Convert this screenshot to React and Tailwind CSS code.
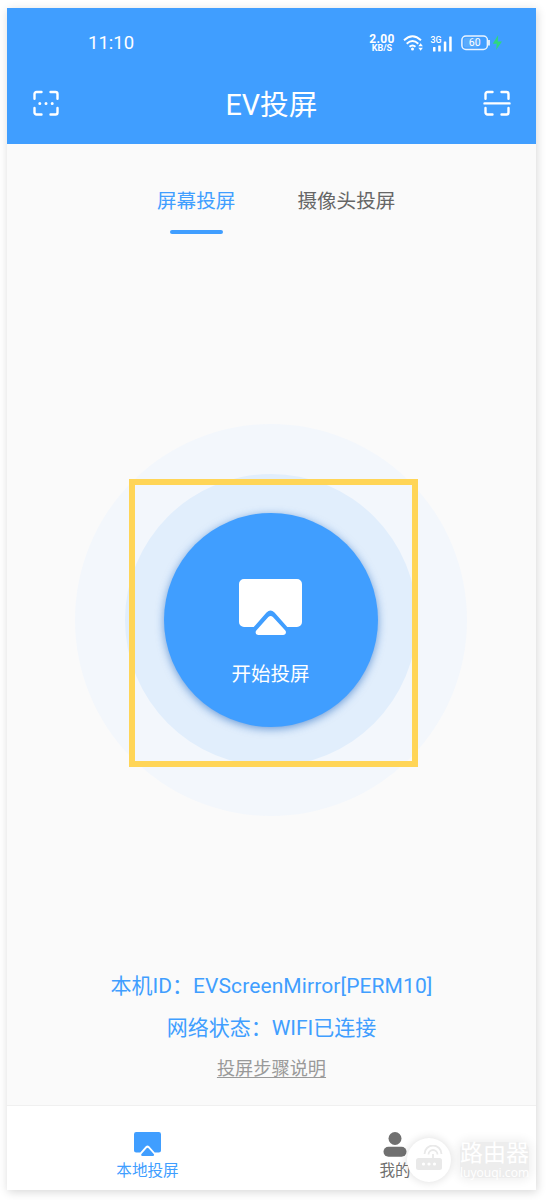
import React from "react";

const CastIcon = ({ className }) => (
    <svg viewBox="0 0 63 56" className={className} fill="currentColor">
        <path d="M5 0h53a5 5 0 0 1 5 5v38a5 5 0 0 1-5 5h-9.700L35.500 33.500q-4-4-8 0L14.700 48H5a5 5 0 0 1-5-5V5a5 5 0 0 1 5-5z" />
        <path d="M29.300 38q2.300-2.200 4.600 0l12.200 13.300c1.800 2 .6 4.700-1.900 4.700H19.400c-2.500 0-3.700-2.700-1.900-4.700z" />
    </svg>
);

const ScanFrame = ({ children }) => (
    <svg
        viewBox="0 0 28 28"
        className="w-7 h-7"
        fill="none"
        stroke="currentColor"
        strokeWidth="2.4"
        strokeLinecap="round"
        strokeLinejoin="round"
    >
        <path d="M2.500 9.800V5a2 2 0 0 1 2-2h5M18.500 3h5a2 2 0 0 1 2 2v4.800M25.500 19v4.500a2 2 0 0 1-2 2h-5M9.500 25.500h-5a2 2 0 0 1-2-2V19" />
        {children}
    </svg>
);

const StatusBar = () => (
    <div className="flex items-center h-[30px] mt-5 pl-[81px] pr-[33px]">
        <span className="text-[18.500px] leading-[30px]">11:10</span>

        <div className="flex items-center ml-auto">
            <div className="flex flex-col items-center w-[26px] font-bold mr-2">
                <span className="text-[12px] leading-[10px] tracking-[0.4px]">2.00</span>
                <span className="text-[9px] leading-[9px]">KB/S</span>
            </div>

            {/* Wifi */}
            <svg viewBox="0 0 21 16" className="w-[21px] h-4 mr-1.5" fill="none" stroke="currentColor" strokeWidth="1.900">
                <path d="M1 5.300Q9.500-2.700 18 5.300M3.700 8.700q5.800-5.300 11.600 0M6.500 11.700q3-2.600 6 0" />
                <circle cx="9.500" cy="14" r="1.500" fill="currentColor" stroke="none" />
                <path d="M15.300 11.300 17.600 8.300 19.900 11.300zM15.300 12.700 17.600 15.700 19.900 12.700z" fill="currentColor" stroke="none" />
            </svg>

            {/* Mobile signal */}
            <svg viewBox="0 0 23 17" className="w-[23px] h-[17px] mr-2" fill="currentColor">
                <text x="0.500" y="7.800" fontSize="9.500" fontWeight="500" textLength="11" lengthAdjust="spacingAndGlyphs">3G</text>
                <rect x="3" y="12" width="2.500" height="4.500" rx="0.5" />
                <rect x="8.200" y="10.500" width="2.500" height="6" rx="0.5" />
                <rect x="13.800" y="6.500" width="2.500" height="10" rx="0.5" />
                <rect x="19.200" y="1.500" width="2.500" height="15" rx="0.5" />
            </svg>

            {/* Battery */}
            <svg viewBox="0 0 42 16" className="w-[42px] h-4" fill="none">
                <rect x="0.900" y="1" width="25.500" height="13.500" rx="4" stroke="#e9f4ff" strokeWidth="1.500" />
                <rect x="2.800" y="3" width="15" height="9.500" rx="2" fill="#5aabfc" />
                <path d="M27.700 5.500h.6v4.500h-.6z" stroke="#e9f4ff" strokeWidth="1.200" />
                <text x="13.700" y="11.400" fontSize="10.500" textAnchor="middle" fill="#fff">60</text>
                <path d="M37.200 0 31.800 8.700h4l-.7 6.300 5.900-8.600h-4.300z" fill="#2fd77f" />
            </svg>
        </div>
    </div>
);

const Header = () => (
    <header className="h-[136px] bg-[#409eff] text-white overflow-hidden">
        <StatusBar />
        <div className="flex items-center justify-between h-10 mt-[25px] px-[25px]">
            <ScanFrame>
                <path d="M7.800 14.400h.01M14 14.400h.01M20.200 14.400h.01" strokeWidth="3" />
            </ScanFrame>
            <h1 className="text-[28.700px] leading-10 pt-1">EV投屏</h1>
            <ScanFrame>
                <path d="M1.500 14.400h25" />
            </ScanFrame>
        </div>
    </header>
);

const Tabs = () => (
    <div className="flex pl-[150px] pt-[43px] gap-[62px] text-[19.600px] leading-[30px]">
        <div className="flex flex-col items-center">
            <span className="text-[#409eff]">屏幕投屏</span>
            <span className="w-[53px] h-1 mt-[13px] rounded-full bg-[#409eff]" />
        </div>
        <span className="text-[#666]">摄像头投屏</span>
    </div>
);

const StartButton = () => (
    <div className="relative flex items-center justify-center w-[392px] h-[392px] mt-[190px] ml-[68px] rounded-full bg-[#f3f7fc]">
        <div className="flex items-center justify-center w-[292px] h-[292px] rounded-full bg-[#e1eefc]">
            <button className="flex flex-col items-center w-[214px] h-[214px] pt-[66px] pr-px rounded-full bg-[#409eff] text-white shadow-[0_2px_8px_rgba(30,100,190,0.6)]">
                <CastIcon className="w-[63px] h-14" />
                <span className="mt-[25px] text-[19.500px] leading-[30px]">开始投屏</span>
            </button>
        </div>

        {/* Highlight frame */}
        <div className="absolute left-[54px] top-[55px] w-[289px] h-[288px] border-[6px] border-[#ffd557]" />
    </div>
);

const DeviceInfo = () => (
    <div className="flex flex-col items-center mt-[155px] text-[21px] text-[#409eff]">
        <p className="h-[30px] leading-[30px] whitespace-nowrap">本机ID：<span className="tracking-[0.1px]">EVScreenMirror[PERM10]</span></p>
        <p className="h-[30px] mt-3 leading-[30px] whitespace-nowrap">网络状态：WIFI已连接</p>
        <a className="mt-3 text-[18.200px] leading-7 text-[#999] underline underline-offset-2 decoration-1">投屏步骤说明</a>
    </div>
);

const BottomNav = () => (
    <nav className="flex h-[85px] mt-auto pt-[26px] border-t border-[#f0f0f0] bg-white text-[15.600px] leading-6">
        <div className="flex flex-col items-center w-[281px] text-[#409eff]">
            <CastIcon className="w-[27px] h-6" />
            <span className="mt-[3px]">本地投屏</span>
        </div>
        <div className="flex flex-col items-center w-[214px] text-[#707070]">
            <svg viewBox="0 0 24 26" className="w-6 h-[26px]" fill="currentColor">
                <circle cx="12" cy="6.500" r="6.500" />
                <rect x="0.500" y="14.800" width="23" height="10" rx="5" />
            </svg>
            <span className="mt-px">我的</span>
        </div>
    </nav>
);

const Watermark = () => (
    <div className="absolute left-[400px] top-[1130px] flex items-center gap-[9px] text-white">
        <div className="flex items-center justify-center w-11 h-11 rounded-full bg-white shadow-[0_0_10px_rgba(0,0,0,0.14)]">
            <svg viewBox="0 0 28 26" className="w-7 h-[26px] -mt-1" fill="none" stroke="#e9e9e9" strokeWidth="1.800">
                <rect x="1" y="13" width="26" height="12" rx="2.500" fill="#e9e9e9" stroke="none" />
                <path d="M18 14V9M9.500 9a8.500 8.500 0 0 1 17 0M13.500 9.500a4.500 4.500 0 0 1 9 0" />
                <g fill="#fff" stroke="none">
                    <circle cx="8.500" cy="19" r="1.600" />
                    <circle cx="14" cy="19" r="1.600" />
                    <circle cx="19.500" cy="19" r="1.600" />
                </g>
            </svg>
        </div>
        <div className="flex flex-col items-start w-[69px] h-9 bg-black/7 shadow-[0_0_10px_3px_rgba(0,0,0,0.06)] rounded-lg">
            <span className="text-[23px] leading-[24px]">路由器</span>
            <span className="font-['Open_Sans'] text-[12.100px] leading-[13px]">luyouqi.com</span>
        </div>
    </div>
);

export default function App() {
    return (
        <div className="w-[547px] h-[1200px] pt-2 pl-[7px] bg-white overflow-hidden font-[Roboto,'Noto_Sans_CJK_SC',sans-serif]">
            <div className="relative flex flex-col w-[529px] h-[1182px] bg-[#fafafa] shadow-[1px_2px_9px_rgba(0,0,0,0.16)]">
                <Header />
                <Tabs />
                <StartButton />
                <DeviceInfo />
                <BottomNav />
                <Watermark />
            </div>
        </div>
    );
}
